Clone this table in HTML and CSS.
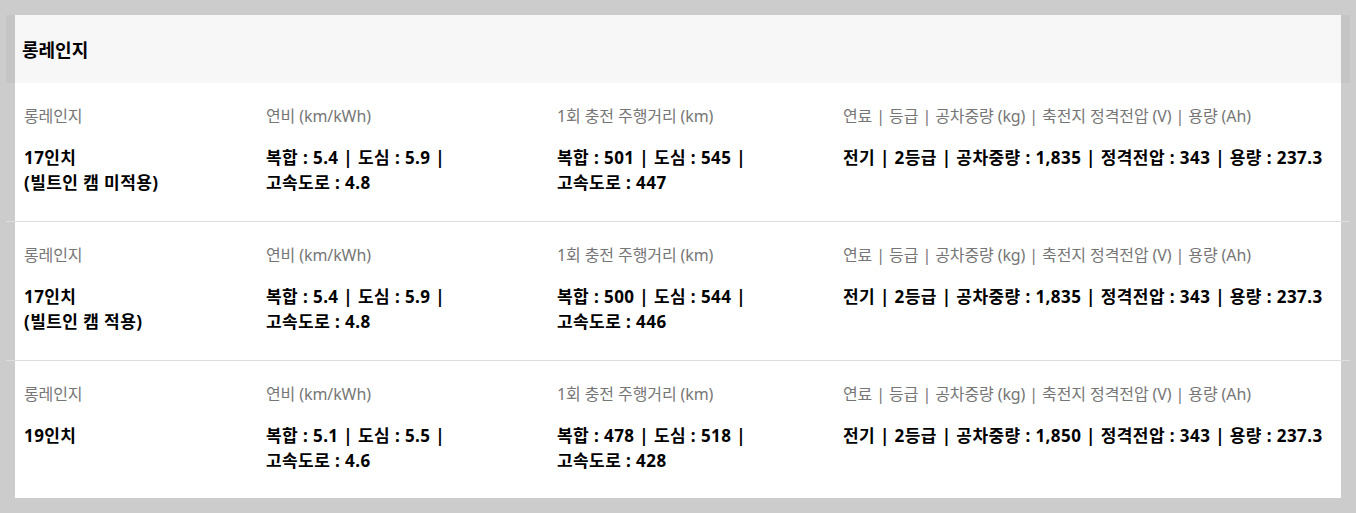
FILE: index.html
```html
<!DOCTYPE html>
<html lang="ko">
<head>
<meta charset="utf-8">
<link rel="stylesheet" href="styles.css">
</head>
<body>
<div class="page">
  <div class="panel">
    <div class="header">롱레인지</div>
    <div class="rows">
      <div class="row">
        <div class="cell"><div class="label">롱레인지</div><div class="value">17인치<br>(빌트인 캠 미적용)</div></div>
        <div class="cell"><div class="label">연비 (km/kWh)</div><div class="value">복합 : 5.4 | 도심 : 5.9 |<br>고속도로 : 4.8</div></div>
        <div class="cell"><div class="label">1회 충전 주행거리 (km)</div><div class="value">복합 : 501 | 도심 : 545 |<br>고속도로 : 447</div></div>
        <div class="cell"><div class="label">연료 | 등급 | 공차중량 (kg) | 축전지 정격전압 (V) | 용량 (Ah)</div><div class="value">전기 | 2등급 | 공차중량 : 1,835 | 정격전압 : 343 | 용량 : 237.3</div></div>
      </div>
      <div class="row">
        <div class="cell"><div class="label">롱레인지</div><div class="value">17인치<br>(빌트인 캠 적용)</div></div>
        <div class="cell"><div class="label">연비 (km/kWh)</div><div class="value">복합 : 5.4 | 도심 : 5.9 |<br>고속도로 : 4.8</div></div>
        <div class="cell"><div class="label">1회 충전 주행거리 (km)</div><div class="value">복합 : 500 | 도심 : 544 |<br>고속도로 : 446</div></div>
        <div class="cell"><div class="label">연료 | 등급 | 공차중량 (kg) | 축전지 정격전압 (V) | 용량 (Ah)</div><div class="value">전기 | 2등급 | 공차중량 : 1,835 | 정격전압 : 343 | 용량 : 237.3</div></div>
      </div>
      <div class="row">
        <div class="cell"><div class="label">롱레인지</div><div class="value">19인치</div></div>
        <div class="cell"><div class="label">연비 (km/kWh)</div><div class="value">복합 : 5.1 | 도심 : 5.5 |<br>고속도로 : 4.6</div></div>
        <div class="cell"><div class="label">1회 충전 주행거리 (km)</div><div class="value">복합 : 478 | 도심 : 518 |<br>고속도로 : 428</div></div>
        <div class="cell"><div class="label">연료 | 등급 | 공차중량 (kg) | 축전지 정격전압 (V) | 용량 (Ah)</div><div class="value">전기 | 2등급 | 공차중량 : 1,850 | 정격전압 : 343 | 용량 : 237.3</div></div>
      </div>
    </div>
  </div>
</div>
</body>
</html>
```
FILE: styles.css
```css
html, body {
  margin: 0;
  padding: 0;
  background: #cccccc;
  font-family: "Noto Sans", "Noto Sans CJK KR", sans-serif;
  color: #000;
}
.page {
  padding: 15px 15px 0 15px;
}
.panel {
  background: #ffffff;
  height: 483px;
}
.header {
  margin: 0 -9px;
  height: 68px;
  box-sizing: border-box;
  padding-left: 16px;
  display: flex;
  align-items: center;
  background: rgba(0, 0, 0, 0.03);
  font-size: 18px;
  font-weight: 700;
}
.rows {
  margin: 0 -9px;
}
.row {
  display: grid;
  grid-template-columns: 242px 291px 286px 1fr;
  padding: 22px 0 25px 18px;
  height: 139px;
  box-sizing: border-box;
  border-bottom: 1px solid #dddddd;
}
.row:last-child {
  border-bottom-color: #b0b0b0;
}
.label {
  font-size: 16px;
  line-height: 22px;
  color: #767676;
  letter-spacing: -0.1px;
  white-space: nowrap;
}
.value {
  margin-top: 18px;
  font-size: 17px;
  line-height: 25px;
  font-weight: 700;
  letter-spacing: 0.42px;
  white-space: nowrap;
}
```
